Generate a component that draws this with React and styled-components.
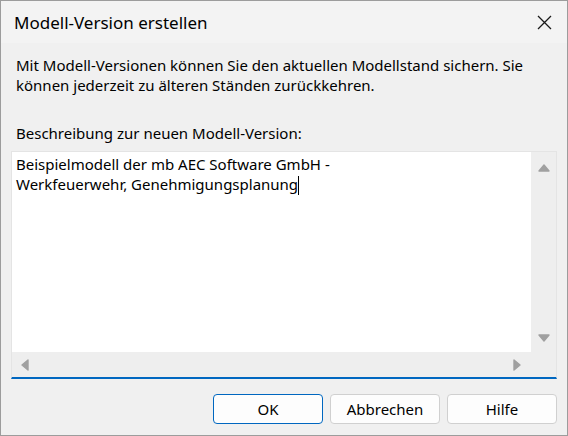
import React from 'react'
import styled, { createGlobalStyle } from 'styled-components'

const GlobalStyle = createGlobalStyle`
    html, body {
        margin: 0;
        padding: 0;
        background: #f0f0f0;
    }
    * {
        box-sizing: border-box;
    }
`

const Window = styled.div`
    width: 568px;
    height: 436px;
    border: 1px solid #9c9c9c;
    background: #f0f0f0;
    display: flex;
    flex-direction: column;
    font-family: "Noto Sans", "Segoe UI", sans-serif;
    color: #000;
`

const TitleBar = styled.div`
    height: 42px;
    flex: none;
    background: #f3f3f3;
    display: flex;
    align-items: center;
    justify-content: space-between;
    padding: 0 14px 0 13px;
`

const Title = styled.div`
    font-size: 17px;
    margin-top: 1px;
`

const CloseButton = styled.div`
    width: 16px;
    height: 16px;
    display: flex;
    align-items: center;
    justify-content: center;
    margin-right: 1px;
`

const Body = styled.div`
    flex: 1;
    display: flex;
    flex-direction: column;
    padding: 12px 10px 0 10px;
`

const Intro = styled.p`
    margin: 0 0 28px 5px;
    font-size: 15px;
    line-height: 20px;
`

const Label = styled.div`
    margin: 0 0 8px 5px;
    font-size: 15px;
    line-height: 20px;
`

const EditBox = styled.div`
    display: grid;
    grid-template-columns: 1fr 25px;
    grid-template-rows: 200px 25px;
    border: 1px solid #e4e4e4;
    border-bottom: 2px solid #0067c0;
    background: #f0f0f0;
`

const TextArea = styled.div`
    background: #fff;
    padding: 2px 4px;
    font-size: 15px;
    line-height: 20px;
`

const Caret = styled.span`
    display: inline-block;
    width: 1px;
    height: 19px;
    background: #000;
    vertical-align: -5px;
`

const ScrollTrack = styled.div`
    background: #eeeeee;
    display: flex;
    flex-direction: ${p => (p.vertical ? 'column' : 'row')};
    justify-content: space-between;
    align-items: center;
    padding: ${p => (p.vertical ? '11px 0 9px 0' : '0 9px 0 8px')};
`

const Corner = styled.div`
    background: #eeeeee;
`

const ButtonRow = styled.div`
    display: flex;
    justify-content: flex-end;
    gap: 7px;
    margin-top: 15px;
`

const Button = styled.div`
    width: 110px;
    height: 30px;
    border: 1px solid ${p => (p.primary ? '#0067c0' : '#d0d0d0')};
    border-radius: 4px;
    background: #fdfdfd;
    display: flex;
    align-items: center;
    justify-content: center;
    font-size: 15px;
`

const Arrow = ({ dir }) => {
    const paths = {
        up: 'M1 8 L6 2 L11 8 Z',
        down: 'M1 1 L6 7 L11 1 Z',
        left: 'M8 1 L2 6 L8 11 Z',
        right: 'M1 1 L7 6 L1 11 Z',
    }
    const vertical = dir === 'up' || dir === 'down'
    return (
        <svg width={vertical ? 12 : 9} height={vertical ? 9 : 12} viewBox={vertical ? '0 0 12 9' : '0 0 9 12'}>
            <path d={paths[dir]} fill="#a0a0a0" stroke="#a0a0a0" strokeWidth="1.4" strokeLinejoin="round" />
        </svg>
    )
}

export default function App() {
    return (
        <Window>
            <GlobalStyle />
            <TitleBar>
                <Title>Modell-Version erstellen</Title>
                <CloseButton>
                    <svg width="15" height="15" viewBox="0 0 15 15">
                        <path d="M1 1 L14 14 M14 1 L1 14" stroke="#1a1a1a" strokeWidth="1.3" />
                    </svg>
                </CloseButton>
            </TitleBar>
            <Body>
                <Intro>
                    Mit Modell-Versionen können Sie den aktuellen Modellstand sichern. Sie
                    <br />
                    können jederzeit zu älteren Ständen zurückkehren.
                </Intro>
                <Label>Beschreibung zur neuen Modell-Version:</Label>
                <EditBox>
                    <TextArea>
                        Beispielmodell der mb AEC Software GmbH -
                        <br />
                        Werkfeuerwehr, Genehmigungsplanung<Caret />
                    </TextArea>
                    <ScrollTrack vertical>
                        <Arrow dir="up" />
                        <Arrow dir="down" />
                    </ScrollTrack>
                    <ScrollTrack>
                        <Arrow dir="left" />
                        <Arrow dir="right" />
                    </ScrollTrack>
                    <Corner />
                </EditBox>
                <ButtonRow>
                    <Button primary>OK</Button>
                    <Button>Abbrechen</Button>
                    <Button>Hilfe</Button>
                </ButtonRow>
            </Body>
        </Window>
    )
}
